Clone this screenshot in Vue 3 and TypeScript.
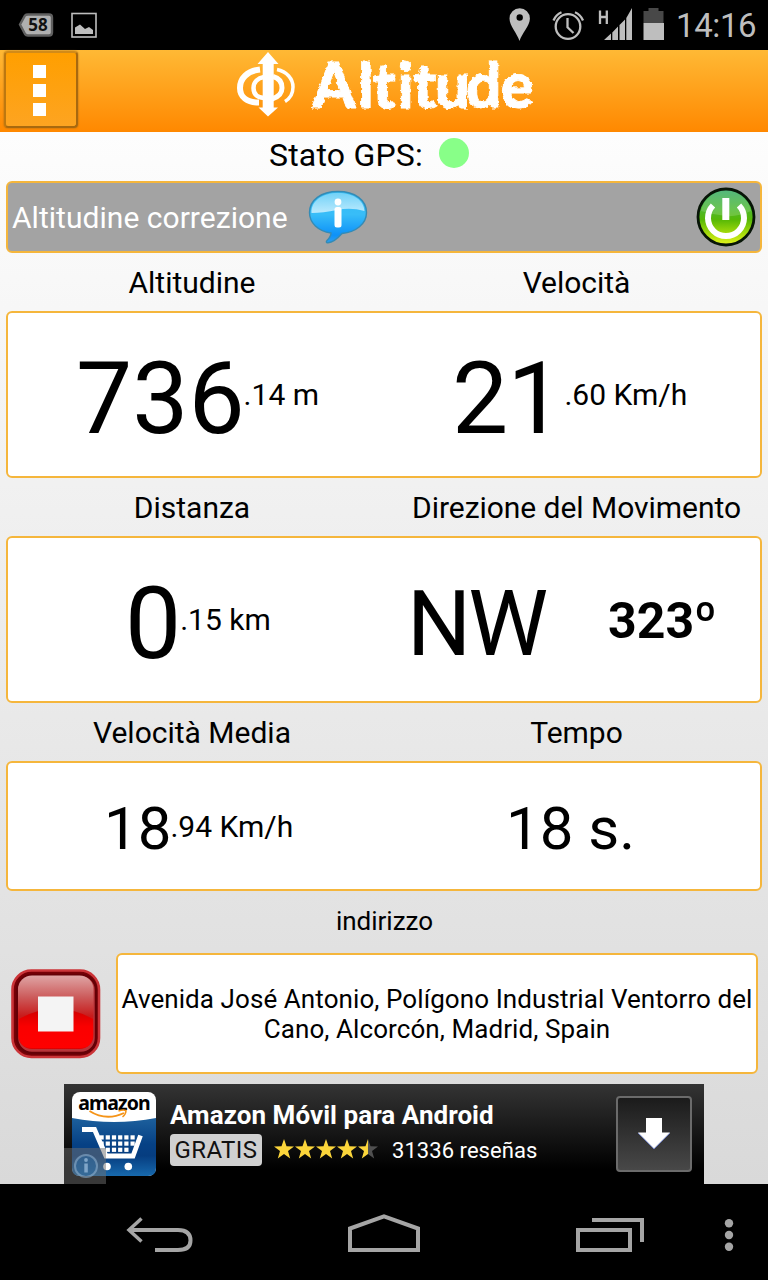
<script setup lang="ts">
interface Reading {
  key: string
  label: string
  main: string
  rest: string
}

interface Panel {
  key: string
  left: Reading
  right: Reading
}

const panels: Panel[] = [
  {
    key: 'first',
    left: { key: 'altitude', label: 'Altitudine', main: '736', rest: '.14 m' },
    right: { key: 'speed', label: 'Velocità', main: '21', rest: '.60 Km/h' },
  },
  {
    key: 'second',
    left: { key: 'distance', label: 'Distanza', main: '0', rest: '.15 km' },
    right: { key: 'heading', label: 'Direzione del Movimento', main: 'NW', rest: '323º' },
  },
  {
    key: 'third',
    left: { key: 'average', label: 'Velocità Media', main: '18', rest: '.94 Km/h' },
    right: { key: 'time', label: 'Tempo', main: '18 s.', rest: '' },
  },
]

const star = 'M10 0 12.5 7.2 20 7.4 14 12 16.2 19.4 10 15 3.8 19.4 6 12 0 7.4 7.5 7.2Z'
const meshColumns: number[] = [0, 1, 2, 3, 4, 5]
const meshRows: number[] = [0, 1, 2]
</script>

<template>
  <div class="screen">
    <div class="status">
      <svg class="status-left" width="110" height="50" viewBox="0 0 110 50">
        <path d="M20 24.500 25 15.500Q26 14.500 28 14.500H49Q52 14.500 52 17.500V32.500Q52 35.500 49 35.500H28Q26 35.500 25 34Z" fill="#b0b0b0" stroke="#606060" stroke-width="2.400" />
        <text x="38" y="31" text-anchor="middle" font-size="17" font-weight="700" fill="#111" class="badge-text">58</text>
        <rect x="72" y="13.500" width="24" height="23.500" fill="none" stroke="#bebebe" stroke-width="1.600" />
        <path d="M75 34V27.500L80 24.500 85 29 89 27 93 30V34Z" fill="#bebebe" />
      </svg>
      <svg class="status-icons" width="168" height="50" viewBox="500 0 168 50">
        <path fill="#bebebe" fill-rule="evenodd" d="M519.500 41C517 33 509.500 26 509.500 18.500A10.200 10.200 0 0 1 529.900 18.500C529.900 26 522 33 519.500 41ZM519.700 14.300A3.200 3.200 0 1 0 519.700 20.700 3.200 3.200 0 1 0 519.700 14.300Z" />
        <g fill="none" stroke="#bebebe" stroke-width="2.300">
          <circle cx="568" cy="26.500" r="12.300" />
          <path d="M567.500 18V27.300L573.500 33M553.500 20.500Q556 14.500 561.500 12.300M575 12.300Q580.500 14.500 583 20.500" />
        </g>
        <path d="M600 10.500V24M606.800 10.500V24M600 17H606.800" fill="none" stroke="#bebebe" stroke-width="2.300" />
        <path fill="#bebebe" d="M604 40 611 33.500V40ZM612.300 32.500 618 26.500V40H612.300ZM619.500 25 625 19.500V40H619.500ZM626.300 18 632 8V40H626.300Z" />
        <path fill="#484848" d="M648.500 8H658.500V11H663.500V23H643.500V11H648.500Z" />
        <rect x="643.500" y="23" width="20.500" height="17" fill="#bebebe" />
      </svg>
      <span class="clock">14:16</span>
    </div>

    <div class="header">
      <div class="menu"><i /><i /><i /></div>
      <svg class="brand" width="310" height="82" viewBox="230 50 310 82">
        <defs>
          <filter id="rough" x="-5%" y="-5%" width="110%" height="110%">
            <feTurbulence type="fractalNoise" baseFrequency="0.220" numOctaves="2" seed="4" result="noise" />
            <feDisplacementMap in="SourceGraphic" in2="noise" scale="4" xChannelSelector="R" yChannelSelector="G" />
          </filter>
        </defs>
        <g fill="none" stroke="#fff">
          <path d="M260 69.500C247 71 240 78.500 240 88C240 97 247 102.500 259 102.500" stroke-width="6" />
          <path d="M277 69.500C287 71.500 293 79 293 87C293 94 290 98.500 285 101.500" stroke-width="3.500" />
          <path d="M264 77C258 78 253.500 82 253.500 88C253.500 94 257 97.500 264 98" stroke-width="4.500" />
          <path d="M273 76.500C279 78 282 82 282 88C282 93 278.500 97 272 99" stroke-width="5" />
        </g>
        <path fill="#fff" d="M268 52 278.500 64H273.700V107.500H278L268 116.500 258.500 107.500H262.700V64H257.500Z" />
        <g filter="url(#rough)">
          <text class="brand-text" x="312 358 372.500 397.500 413 435 466 500.500" y="108">Altitude</text>
        </g>
      </svg>
    </div>

    <div class="gps"><span>Stato GPS:</span><b /></div>

    <div class="correction">
      <span>Altitudine correzione</span>
      <svg class="info" width="62" height="56" viewBox="307 189 62 56">
        <defs>
          <linearGradient id="bubble" x1="0" y1="0" x2="0" y2="1">
            <stop offset="0" stop-color="#35bdf5" /><stop offset="0.450" stop-color="#38bdf8" /><stop offset="0.850" stop-color="#0d91f8" /><stop offset="1" stop-color="#2e9fee" />
          </linearGradient>
          <linearGradient id="shine" x1="0" y1="0" x2="0" y2="1">
            <stop offset="0" stop-color="#72d2f8" /><stop offset="1" stop-color="#bceafd" />
          </linearGradient>
        </defs>
        <path d="M338 191.500C355 191.500 366.500 200 366.500 212.500C366.500 224 356 232 342 233.500C338 238 333 242.500 328 242.800C326 243 326 241.500 327 240.500C330 237.500 331 235 331 233C318 231 309.500 223 309.500 212.500C309.500 200 321 191.500 338 191.500Z" fill="url(#bubble)" stroke="#348bb5" stroke-width="1.400" />
        <path d="M338 193C353 193 364 200 364.500 211Q351 207 337 210Q323 213 311.500 213C311 201 322 193 338 193Z" fill="url(#shine)" />
        <circle cx="338" cy="202" r="3.400" fill="#fff" />
        <rect x="334.500" y="207" width="7" height="20.500" rx="2.500" fill="#fff" />
      </svg>
      <svg class="power" width="60" height="60" viewBox="696 187 60 60">
        <defs>
          <linearGradient id="green" x1="0" y1="0" x2="0" y2="1">
            <stop offset="0" stop-color="#2fa865" /><stop offset="0.350" stop-color="#4cb830" /><stop offset="0.550" stop-color="#57b806" /><stop offset="0.800" stop-color="#a8dc0c" /><stop offset="1" stop-color="#e4f51c" />
          </linearGradient>
        </defs>
        <circle cx="726" cy="217" r="28" fill="url(#green)" stroke="#071507" stroke-width="2.800" />
        <path d="M701 211A25.500 25.500 0 0 1 751 211Q738 217 726 216T701 211Z" fill="#fff" opacity="0.170" />
        <path d="M713 205.500A18 18 0 1 0 739 205.500" fill="none" stroke="#fff" stroke-width="6" />
        <rect x="722.300" y="198" width="7" height="22" fill="#fff" />
      </svg>
    </div>

    <template v-for="p in panels" :key="p.key">
      <div class="labels"><span>{{ p.left.label }}</span><span>{{ p.right.label }}</span></div>
      <div class="card" :class="p.key">
        <div v-for="r in [p.left, p.right]" :key="r.key" class="reading" :class="r.key">
          <span class="main">{{ r.main }}</span><span v-if="r.rest" class="rest">{{ r.rest }}</span>
        </div>
      </div>
    </template>

    <div class="address-label"><span>indirizzo</span></div>
    <div class="address-row">
      <svg class="stop" width="92" height="92" viewBox="10 967 92 92">
        <defs>
          <linearGradient id="gloss" x1="0" y1="0" x2="0" y2="1">
            <stop offset="0" stop-color="#dfa5a5" /><stop offset="0.300" stop-color="#cc5a5a" /><stop offset="0.550" stop-color="#c81c1c" /><stop offset="1" stop-color="#e00000" />
          </linearGradient>
          <linearGradient id="lower" x1="0" y1="0" x2="0" y2="1">
            <stop offset="0" stop-color="#cf0000" /><stop offset="0.450" stop-color="#fa0000" /><stop offset="1" stop-color="#f00" />
          </linearGradient>
        </defs>
        <rect x="12.500" y="969.500" width="86.500" height="86.500" rx="19" fill="#760006" stroke="#cb3438" stroke-width="2.600" />
        <rect x="17" y="974" width="79" height="78" rx="15" fill="#b8353a" stroke="#650006" stroke-width="2.500" />
        <rect x="18" y="974.500" width="75.500" height="73.500" rx="14" fill="url(#gloss)" />
        <path d="M19 1018Q36 1008 56 1008T93 1018V1034Q93 1047 80 1047H32Q19 1047 19 1034Z" fill="url(#lower)" />
        <rect x="38" y="995.500" width="35.500" height="35" fill="#f4f4f4" />
      </svg>
      <div class="address"><span class="line1">Avenida José Antonio, Polígono Industrial Ventorro del</span><span class="line2">Cano, Alcorcón, Madrid, Spain</span></div>
    </div>

    <div class="ad">
      <svg class="ad-logo" width="96" height="100" viewBox="64 1084 96 100">
        <defs>
          <linearGradient id="blue" x1="0" y1="0" x2="0" y2="1">
            <stop offset="0" stop-color="#1d609d" /><stop offset="0.450" stop-color="#064185" /><stop offset="0.650" stop-color="#063d80" /><stop offset="1" stop-color="#1769ad" />
          </linearGradient>
        </defs>
        <rect x="72" y="1092" width="84" height="84" rx="8" fill="#fff" />
        <path d="M72 1118Q114 1126 156 1118V1168Q156 1176 148 1176H80Q72 1176 72 1168Z" fill="url(#blue)" />
        <text x="114" y="1109.500" text-anchor="middle" class="amazon">amazon</text>
        <path d="M89.500 1111Q106 1121.500 124 1113" fill="none" stroke="#f59418" stroke-width="1.900" />
        <path d="M118.500 1111Q123 1109.500 126 1110.500Q126 1114 122.500 1117" fill="none" stroke="#f59418" stroke-width="1.500" />
        <path d="M82 1129.500H94.500L106 1156H133L140.500 1135.500" fill="none" stroke="#fff" stroke-width="4.800" />
        <template v-for="row in meshRows" :key="row">
          <template v-for="col in meshColumns" :key="col">
            <rect v-if="!(row === 2 && (col === 0 || col === 5))" :x="99.5 + col * 6.2" :y="1135.3 + row * 6.2" width="4.200" height="4.200" fill="#fff" />
          </template>
        </template>
        <circle cx="107" cy="1166.500" r="3.800" fill="#fff" /><circle cx="128.300" cy="1166.500" r="3.800" fill="#fff" />
        <rect x="64" y="1148" width="42" height="36" fill="#707070" opacity="0.500" />
        <circle cx="86" cy="1166" r="11" fill="#2c699f" opacity="0.550" stroke="#91b7d8" stroke-width="2" />
        <circle cx="86" cy="1160" r="1.900" fill="#7fa5c8" />
        <rect x="84.300" y="1163.500" width="3.500" height="9" fill="#7fa5c8" />
      </svg>
      <div class="ad-copy">
        <div class="ad-title"><span>Amazon Móvil para Android</span></div>
        <div class="ad-meta">
          <span class="gratis">GRATIS</span>
          <svg class="stars" width="106" height="22" viewBox="0 0 106 22">
            <defs>
              <linearGradient id="half"><stop offset="0.500" stop-color="#fbd53b" /><stop offset="0.500" stop-color="#505050" /></linearGradient>
            </defs>
            <path v-for="n in 5" :key="n" :d="star" :transform="`translate(${(n - 1) * 21} 0)`" :fill="n === 5 ? 'url(#half)' : '#fbd53b'" />
          </svg>
          <span class="reviews">31336 reseñas</span>
        </div>
      </div>
      <div class="download">
        <svg width="34" height="34" viewBox="0 0 34 34"><path d="M9 1H25V15.500H33L17 31.500 1 15.500H9Z" fill="#fff" /><path d="M1 16 17 32 33 16" fill="none" stroke="#7383c4" stroke-width="1" /></svg>
      </div>
    </div>

    <div class="nav">
      <svg width="768" height="96" viewBox="0 1184 768 96">
        <g fill="none" stroke="#a5a5a5" stroke-width="4">
          <path d="M144.500 1250H178" transform="translate(10 0)" stroke="none" />
          <path d="M155 1250H178C187 1250 190.500 1246 190.500 1240.500C190.500 1234 187 1230 178 1230H129" />
          <path d="M141.500 1218.500 129 1230 141.500 1241.500" stroke-width="3.500" />
          <path d="M350 1250V1228.500L384 1216.300 418 1228.500V1250Z" />
          <path d="M578 1230H630V1250H578ZM592 1220H642V1242" />
        </g>
        <g fill="#a5a5a5"><circle cx="729" cy="1223.300" r="4.200" /><circle cx="729" cy="1235" r="4.200" /><circle cx="729" cy="1246.700" r="4.200" /></g>
      </svg>
    </div>
  </div>
</template>

<style>
body {
  margin: 0;
  background: #000;
}
</style>

<style scoped>
.screen {
  width: 768px;
  height: 1280px;
  overflow: hidden;
  display: flex;
  flex-direction: column;
  box-sizing: border-box;
  background: linear-gradient(#fdfdfd 132px, #d9d9d9 1184px);
  font-family: Roboto, "Noto Sans", sans-serif;
  color: #000;
}
.screen * { box-sizing: border-box; }
.screen > div { flex: none; }
.screen span { white-space: nowrap; }
svg { display: block; flex: none; }
.badge-text { font-family: "Noto Sans", sans-serif; }
.status {
  height: 50px;
  background: #000;
  display: flex;
  align-items: center;
}
.status-icons { margin-left: 390px; }
.clock {
  margin-left: 8px;
  font-size: 33px;
  line-height: 50px;
  color: #bebebe;
  letter-spacing: -0.4px;
  padding-top: 2px;
}
.header {
  height: 82px;
  display: flex;
  background: linear-gradient(#ffb935, #ff8800);
}
.menu {
  width: 74px;
  height: 77px;
  margin: 1px 0 0 4px;
  padding-right: 3px;
  display: flex;
  flex-direction: column;
  align-items: center;
  justify-content: center;
  gap: 6px;
  border: 2px solid #a8690f;
  border-top-color: #d28b18;
  border-left-color: #bd7810;
  border-radius: 4px;
  background: linear-gradient(#ff9f00, #fda421);
  box-shadow: 0 0 2px #9c6415;
}
.menu i { width: 13px; height: 13px; background: #fff; }
.menu i:first-child { margin-top: 2px; }
.brand { margin-left: 152px; overflow: visible; }
.brand-text { font-family: Lato, sans-serif; font-size: 62px; font-weight: 900; fill: #fff; stroke: #fff; stroke-width: 0.8px; }
.gps {
  height: 49px;
  padding: 0 0 4px 269px;
  display: flex;
  align-items: center;
  font-size: 32px;
  letter-spacing: 0.2px;
}
.gps span { width: 170px; }
.gps b { width: 30px; height: 30px; margin-top: -3px; border-radius: 50%; background: #88ff88; }
.correction {
  height: 72px;
  margin: 0 6px;
  padding: 0 4px;
  display: flex;
  align-items: center;
  border: 2px solid #f5b63c;
  border-radius: 6px;
  background: #a3a3a3;
  color: #fff;
  font-size: 30px;
}
.correction span { width: 295px; letter-spacing: 0.03px; }
.power { margin-left: auto; }
.labels {
  height: 58px;
  display: grid;
  grid-template-columns: 384px 384px;
  justify-items: center;
  align-items: center;
  font-size: 30px;
}
.labels span:last-child { margin-left: 1px; letter-spacing: -0.04px; }
.card {
  height: 167px;
  margin: 0 6px;
  display: grid;
  grid-template-columns: 378px 1fr;
  border: 2px solid #f5b63c;
  border-radius: 6px;
  background: #fff;
}
.third { height: 130px; }
.reading { display: flex; align-items: center; }
.main { font-size: 100px; line-height: 117px; padding-top: 8px; }
.rest { font-size: 30px; }
.altitude { padding-left: 68px; }
.altitude .rest { margin-left: -1px; }
.speed { padding-left: 66px; }
.speed .main { letter-spacing: -1px; }
.speed .rest { margin-left: 2px; }
.distance { padding-left: 117px; }
.distance .rest { margin-left: -1px; }
.heading { padding-left: 21px; }
.heading .main { font-size: 90px; letter-spacing: -3px; padding-top: 10px; }
.heading .rest { margin-left: 63px; padding-top: 3px; font-size: 50px; font-weight: 700; }
.average { padding-left: 96px; }
.average .rest { margin-left: -1px; }
.third .main { font-size: 60px; padding-top: 4px; }
.time { padding-left: 120px; }
.address-label {
  height: 62px;
  display: flex;
  justify-content: center;
  align-items: center;
  font-size: 26px;
  padding: 0 0 2px 1px;
}
.address-row {
  height: 121px;
  display: flex;
  align-items: center;
  padding: 0 10px;
}
.address {
  width: 642px;
  height: 121px;
  margin-left: 14px;
  display: flex;
  flex-direction: column;
  align-items: center;
  justify-content: center;
  border: 2px solid #f5b63c;
  border-radius: 6px;
  background: #fff;
  font-size: 26px;
  line-height: 30px;
  letter-spacing: 0.08px;
}
.ad {
  width: 640px;
  height: 100px;
  margin: 10px 64px 0;
  display: flex;
  background: linear-gradient(#343434, #000 85%);
  color: #fff;
}
.amazon { font-family: "Noto Sans", sans-serif; font-size: 19.5px; font-weight: 700; letter-spacing: -0.9px; fill: #000; }
.ad-copy { width: 446px; margin-left: 10px; padding-top: 14px; }
.ad-title { height: 36px; font-size: 26px; line-height: 34px; font-weight: 700; letter-spacing: 0.05px; }
.ad-meta { display: flex; align-items: center; height: 32px; }
.gratis {
  width: 92px;
  height: 32px;
  border-radius: 4px;
  background: #d0d0d0;
  color: #111;
  text-align: center;
  font-size: 24px;
  line-height: 33px;
  letter-spacing: 0.4px;
}
.stars { margin-left: 12px; }
.reviews { margin-left: 12px; font-size: 22px; letter-spacing: 0.05px; }
.download {
  width: 76px;
  height: 76px;
  margin-top: 12px;
  display: flex;
  align-items: center;
  justify-content: center;
  border: 2px solid #6b6b6b;
  border-radius: 4px;
  background: linear-gradient(#1b1b1b, #484848);
}
.nav { height: 96px; background: #000; }
</style>
